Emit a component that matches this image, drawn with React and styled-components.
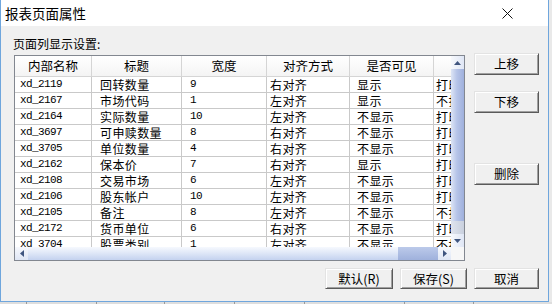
import React from 'react';
import styled, { createGlobalStyle } from 'styled-components';

const GlobalStyle = createGlobalStyle`
  html, body {
    margin: 0;
    padding: 0;
    background: #e9e9e9;
  }
  * {
    box-sizing: border-box;
  }
`;

const cjk = `"Noto Sans CJK SC", "Noto Sans", sans-serif`;
const mono = `"Liberation Mono", "Noto Sans CJK SC", monospace`;

const columns = [
  { title: '内部名称', width: 77, pad: 5, mono: true },
  { title: '标题', width: 90, pad: 8 },
  { title: '宽度', width: 85, pad: 8, mono: true },
  { title: '对齐方式', width: 83, pad: 3 },
  { title: '是否可见', width: 84, pad: 7 },
  { title: '是否打印', width: 90, pad: 2 },
];

const rows = [
  ['xd_2119', '回转数量', '9', '右对齐', '显示', '打印'],
  ['xd_2167', '市场代码', '1', '左对齐', '显示', '不打印'],
  ['xd_2164', '实际数量', '10', '左对齐', '不显示', '打印'],
  ['xd_3697', '可申赎数量', '8', '右对齐', '不显示', '打印'],
  ['xd_3705', '单位数量', '4', '右对齐', '不显示', '打印'],
  ['xd_2162', '保本价', '7', '右对齐', '显示', '打印'],
  ['xd_2108', '交易市场', '6', '左对齐', '不显示', '打印'],
  ['xd_2106', '股东帐户', '10', '左对齐', '不显示', '打印'],
  ['xd_2105', '备注', '8', '左对齐', '不显示', '不打印'],
  ['xd_2172', '货币单位', '6', '右对齐', '不显示', '打印'],
  ['xd_3704', '股票类别', '1', '左对齐', '不显示', '不打印'],
];

const gridCols = columns.map((c) => `${c.width}px`).join(' ');

const Dialog = styled.div`
  width: 549px;
  height: 302px;
  display: flex;
  flex-direction: column;
  background: #f0f0f0;
  border: 1px solid #6fa6dd;
  border-top: none;
`;

const TitleBar = styled.div`
  height: 26px;
  flex: none;
  display: flex;
  align-items: center;
  justify-content: space-between;
  padding: 0 35px 0 4px;
  background: #fff;
  font-family: ${cjk};
  font-size: 13.5px;
  color: #000;
`;

const Body = styled.div`
  flex: 1;
  display: flex;
  flex-direction: column;
  padding: 10px 9px 0 12px;
`;

const Label = styled.div`
  font-family: ${cjk};
  font-size: 12px;
  line-height: 16px;
  height: 16px;
  color: #000;
`;

const Main = styled.div`
  display: flex;
  align-items: flex-start;
  margin-top: 1px;
`;

const Frame = styled.div`
  width: 451px;
  height: 206px;
  margin: 2px 0 0 1px;
  border: 1px solid #828790;
  background: #fff;
  display: grid;
  grid-template-columns: 436px 13px;
  grid-template-rows: 191px 13px;
`;

const Viewport = styled.div`
  overflow: hidden;
  width: 436px;
`;

const Row = styled.div`
  display: grid;
  grid-template-columns: ${gridCols};
  width: max-content;
`;

const HeadCell = styled.div`
  height: 21px;
  border-right: 1px solid #d5d5d5;
  border-bottom: 1px solid #d5d5d5;
  background: linear-gradient(#ffffff, #f4f4f4);
  font-family: ${cjk};
  font-size: 12.5px;
  line-height: 20px;
  text-align: center;
  color: #000;
  white-space: nowrap;
`;

const Cell = styled.div`
  height: 16px;
  padding-left: ${(p) => p.$pad}px;
  border-right: 1px solid #c9c9c9;
  border-bottom: 1px solid #c9c9c9;
  font-family: ${(p) => (p.$mono ? mono : cjk)};
  font-size: ${(p) => (p.$mono ? '11px' : '12px')};
  letter-spacing: ${(p) => (p.$mono ? '-0.6px' : '0.4px')};
  line-height: 15px;
  color: #000;
  white-space: nowrap;
`;

const VScroll = styled.div`
  display: flex;
  flex-direction: column;
  background: #eef1f7;
`;

const HScroll = styled.div`
  display: flex;
  background: #eef1f7;
`;

const Arrow = styled.div`
  flex: none;
  width: 13px;
  height: 13px;
  display: flex;
  align-items: center;
  justify-content: center;
  background: linear-gradient(${(p) => (p.$horiz ? '180deg' : '90deg')}, #f7f9fd, #dfe6f5);
`;

const VThumb = styled.div`
  height: ${(p) => p.$size}px;
  background: ${(p) =>
    p.$dark
      ? 'linear-gradient(90deg, #dfe4ee, #c9d0de)'
      : 'linear-gradient(90deg, #dde5f5, #b6c4e8 45%, #9fb0dc)'};
`;

const HThumb = styled.div`
  width: ${(p) => p.$size}px;
  background: ${(p) =>
    p.$dark
      ? 'linear-gradient(180deg, #bccaea, #9fb1dc)'
      : 'linear-gradient(180deg, #f6f9fe, #dbe4f6 55%, #c4d2ef)'};
`;

const Corner = styled.div`
  background: #f7f7f7;
`;

const Side = styled.div`
  display: flex;
  flex-direction: column;
  margin-left: 9px;
`;

const Button = styled.button`
  width: ${(p) => p.$w || 65}px;
  height: ${(p) => p.$h || 22}px;
  margin-top: ${(p) => p.$top || 0}px;
  padding: 0;
  background: #f0f0f0;
  border: 1px solid;
  border-color: #e3e3e3 #5a5a5a #5a5a5a #e3e3e3;
  box-shadow: inset 1px 1px #ffffff, inset -1px -1px #a0a0a0;
  font-family: ${cjk};
  font-size: 12.5px;
  font-weight: 400;
  line-height: 18px;
  color: #000;
`;

const Footer = styled.div`
  display: flex;
  justify-content: flex-end;
  gap: 7px;
  margin-top: 7px;
`;

const Under = styled.div`
  display: flex;
  height: 2px;
  width: 552px;
  background: #dedede;
`;

const UnderCell = styled.div`
  width: ${(p) => p.$w}px;
  border-right: 1px solid #9a9a9a;
`;

function Tri({ dir }) {
  const pts = {
    up: '0,4 3.5,0 7,4',
    down: '0,0 3.5,4 7,0',
    left: '4,0 0,3.5 4,7',
    right: '0,0 4,3.5 0,7',
  }[dir];
  const horiz = dir === 'left' || dir === 'right';
  return (
    <svg width={horiz ? 4 : 7} height={horiz ? 7 : 4} viewBox={horiz ? '0 0 4 7' : '0 0 7 4'}>
      <polygon points={pts} fill="#3f557f" />
    </svg>
  );
}

function CloseIcon() {
  return (
    <svg width="11" height="11" viewBox="0 0 11 11">
      <path d="M0.5 0.5 L10.5 10.5 M10.5 0.5 L0.5 10.5" stroke="#111" strokeWidth="1" />
    </svg>
  );
}

export default function App() {
  return (
    <>
      <GlobalStyle />
      <Dialog>
        <TitleBar>
          <span>报表页面属性</span>
          <CloseIcon />
        </TitleBar>
        <Body>
          <Label>页面列显示设置:</Label>
          <Main>
            <Frame>
              <Viewport>
                <Row>
                  {columns.map((c) => (
                    <HeadCell key={c.title}>{c.title}</HeadCell>
                  ))}
                </Row>
                {rows.map((r) => (
                  <Row key={r[0]}>
                    {r.map((v, i) => (
                      <Cell key={i} $pad={columns[i].pad} $mono={columns[i].mono}>
                        {v}
                      </Cell>
                    ))}
                  </Row>
                ))}
              </Viewport>
              <VScroll>
                <Arrow><Tri dir="up" /></Arrow>
                <VThumb $size={152} />
                <VThumb $size={13} $dark />
                <Arrow><Tri dir="down" /></Arrow>
              </VScroll>
              <HScroll>
                <Arrow $horiz><Tri dir="left" /></Arrow>
                <HThumb $size={370} />
                <HThumb $size={40} $dark />
                <Arrow $horiz><Tri dir="right" /></Arrow>
              </HScroll>
              <Corner />
            </Frame>
            <Side>
              <Button>上移</Button>
              <Button $top={16}>下移</Button>
              <Button $top={50}>删除</Button>
            </Side>
          </Main>
          <Footer>
            <Button $w={68} $h={21}>默认(R)</Button>
            <Button $w={67} $h={21}>保存(S)</Button>
            <Button $w={65} $h={21}>取消</Button>
          </Footer>
        </Body>
      </Dialog>
      <Under>
        <UnderCell $w={27} />
        <UnderCell $w={70} />
        <UnderCell $w={68} />
        <UnderCell $w={70} />
        <UnderCell $w={70} />
        <UnderCell $w={100} />
        <UnderCell $w={69} />
      </Under>
    </>
  );
}
